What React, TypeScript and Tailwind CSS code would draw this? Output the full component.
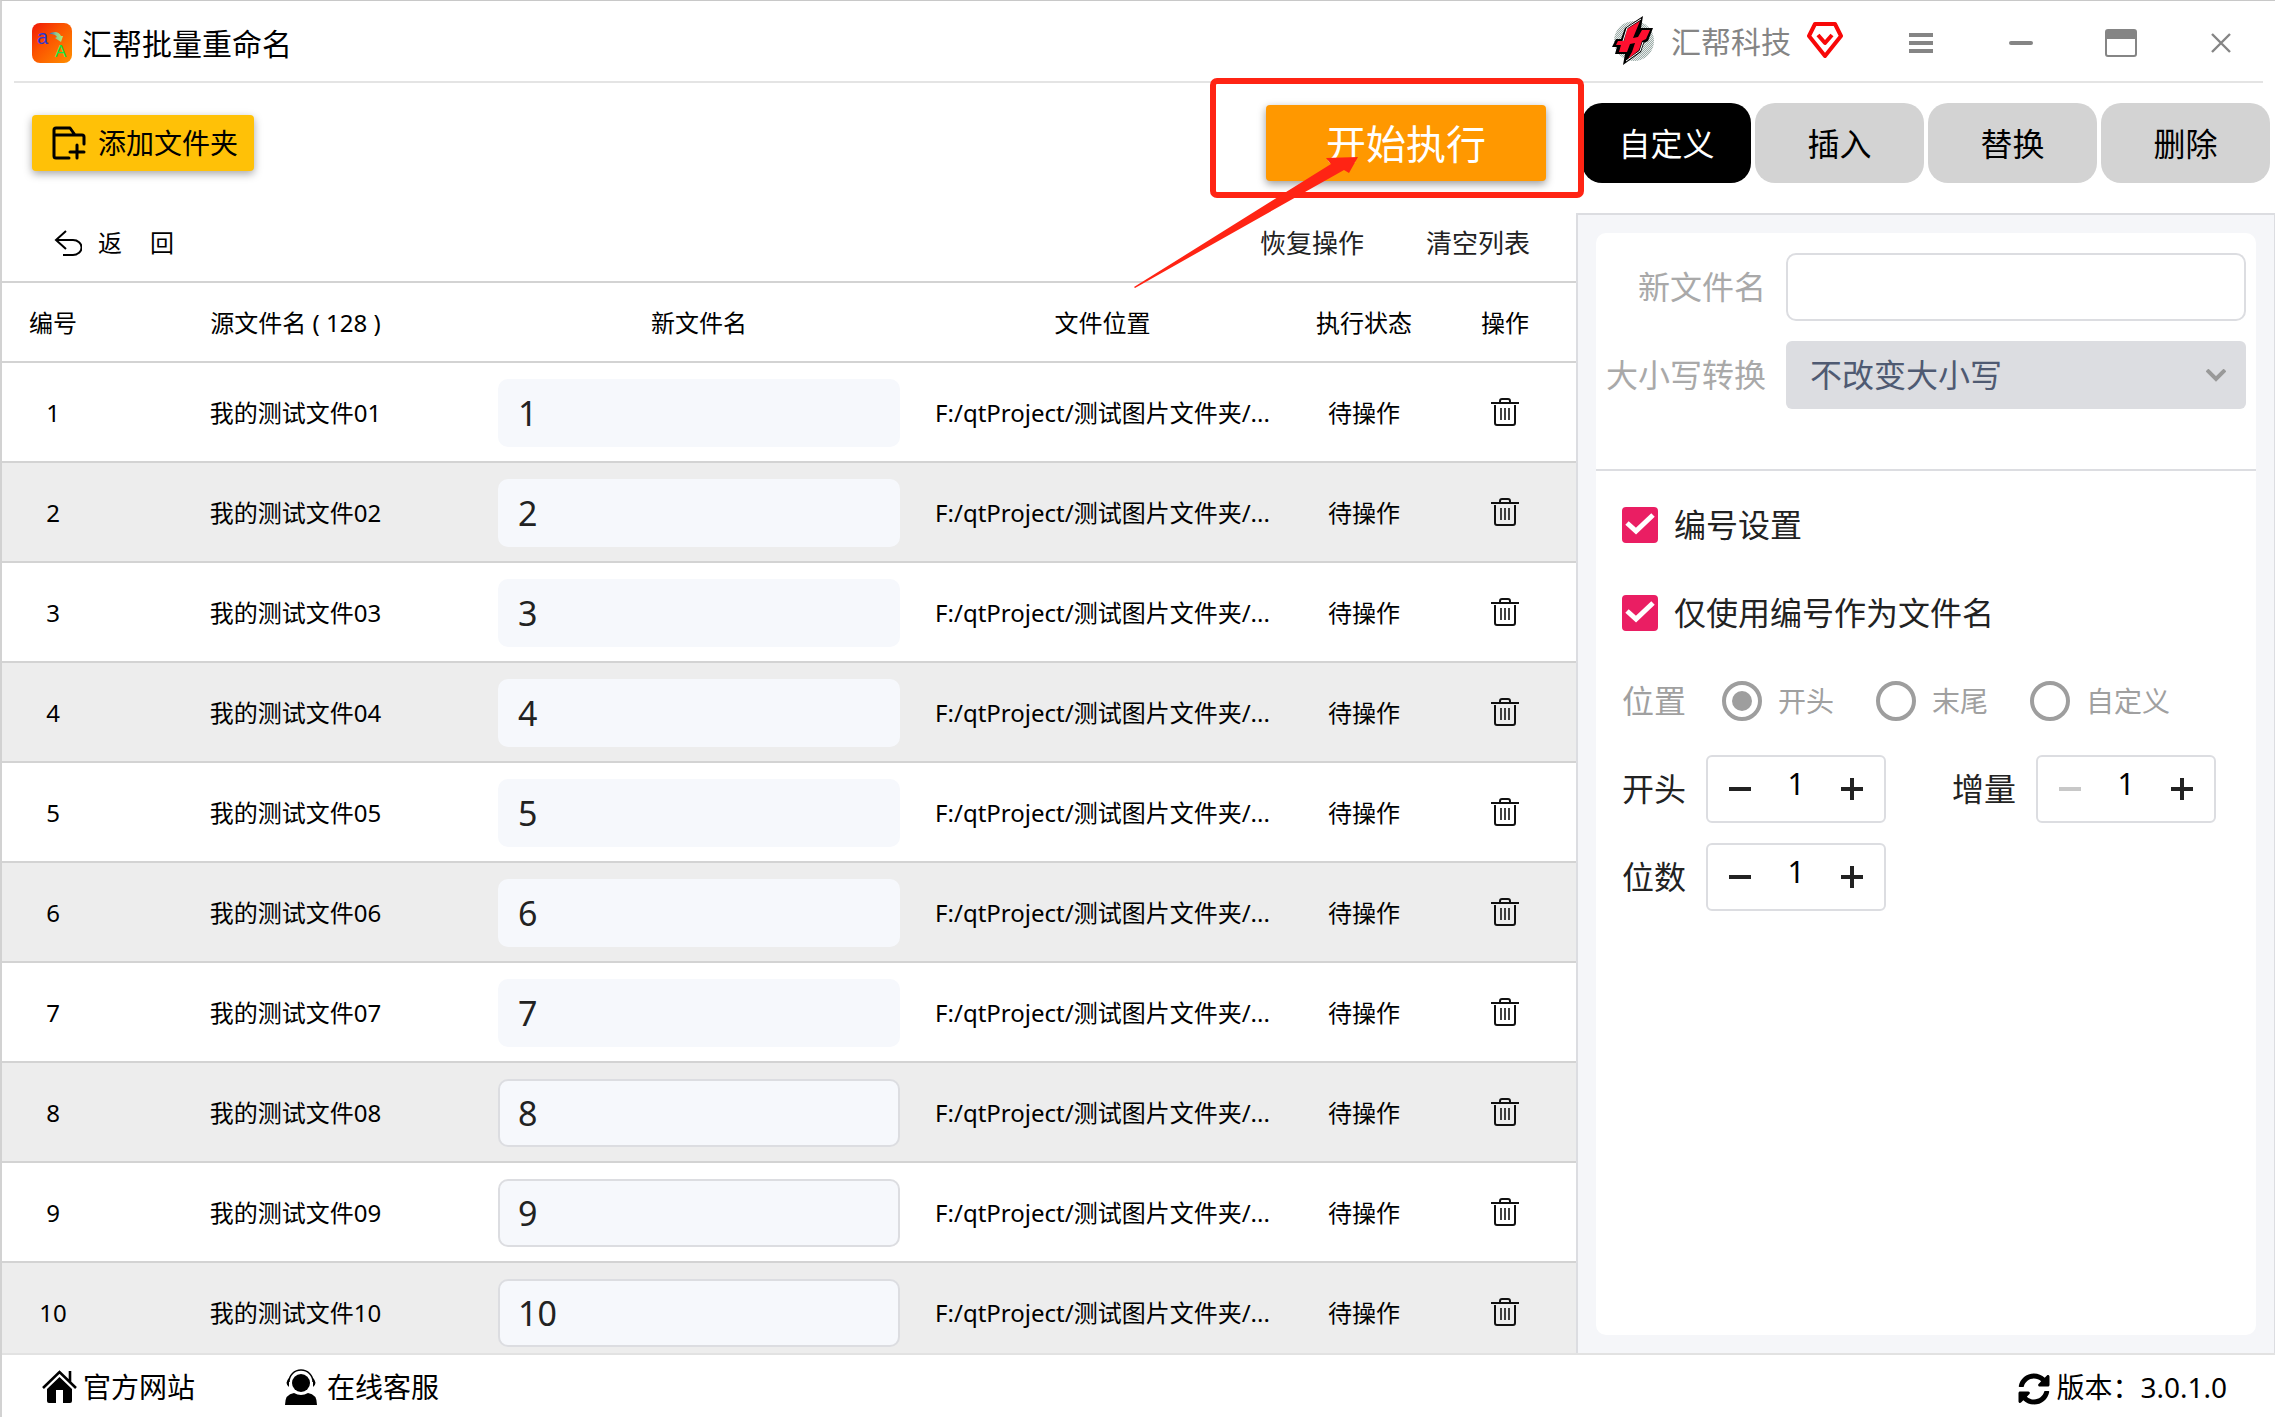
import { useState } from "react";

const initialRows = Array.from({ length: 10 }, (_, i) => ({
  id: i + 1,
  source: `我的测试文件${String(i + 1).padStart(2, "0")}`,
  target: String(i + 1),
  location: "F:/qtProject/测试图片文件夹/...",
  status: "待操作",
  outlined: i > 6,
}));

const tabs = ["自定义", "插入", "替换", "删除"];
const positions = ["开头", "末尾", "自定义"];

function AppLogo() {
  return (
    <svg width="40" height="40" viewBox="0 0 40 40" aria-hidden="true">
      <defs>
        <linearGradient id="logoBg" x1="0" y1="0" x2="1" y2="1">
          <stop offset="0" stopColor="#f01808" />
          <stop offset="0.4" stopColor="#fb5200" />
          <stop offset="1" stopColor="#ff9000" />
        </linearGradient>
        <linearGradient id="logoArrow" x1="0" y1="0" x2="1" y2="0">
          <stop offset="0" stopColor="#2858c8" />
          <stop offset="0.5" stopColor="#90c890" />
          <stop offset="1" stopColor="#b4f070" />
        </linearGradient>
      </defs>
      <rect width="40" height="40" rx="8" fill="url(#logoBg)" />
      <path d="M17 11c4-3 10-3 12 2l2 0-2 6-6-4 2-1c-2-3-5-3-8-3z" fill="url(#logoArrow)" />
      <text x="5" y="21" fontSize="20" fill="#3038d0" fontFamily="Liberation Sans, sans-serif">a</text>
      <text x="23" y="34" fontSize="17" fill="#10e848" fontFamily="Liberation Sans, sans-serif">A</text>
    </svg>
  );
}

function BrandLogo() {
  return (
    <svg width="44" height="50" viewBox="0 0 44 50" aria-hidden="true">
      <defs>
        <pattern id="dots" width="2" height="2" patternUnits="userSpaceOnUse">
          <rect width="2" height="2" fill="#e8eceb" />
          <rect width="1" height="1" fill="#9cabA7" />
          <rect x="1" y="1" width="1" height="1" fill="#9cabA7" />
        </pattern>
      </defs>
      <circle cx="23" cy="25" r="20" fill="url(#dots)" />
      <path d="M32 0 14 12 10 23H5L1 31H6L4 38 14 38 12 49 30 36 33 27 37 25 42 12H30z" fill="#000" />
      <path d="M29 5 16 13 13 25 7 25 5 29 10 29 8 36 16 36 19 28 24 27 21 36 17 43 28 34 31 25 35 23 39 14 31 14 27 21 22 22z" fill="#ff1030" />
      <path d="M30 3 16 12 12 25M15 45 29 35 32 26" stroke="#fff" strokeWidth="1" fill="none" />
    </svg>
  );
}

function TrashIcon() {
  return (
    <svg width="28" height="30" viewBox="0 0 28 30" fill="none" stroke="#111" strokeWidth="2" aria-hidden="true">
      <path d="M0 6h28M9 6V4q0-2 2-2h6q2 0 2 2v2M4 8v18q0 2 2 2h16q2 0 2-2V8" />
      <path d="M10 11v12M14 11v12M18 11v12" strokeWidth="1.6" />
    </svg>
  );
}

function CheckRow({ id, label }: { id: string; label: string }) {
  const [checked, setChecked] = useState(true);
  return (
    <div className="flex h-9 items-center gap-4">
      <span className="relative flex size-9">
        <input
          id={id}
          type="checkbox"
          checked={checked}
          onChange={(e) => setChecked(e.target.checked)}
          className="size-9 appearance-none rounded border-2 border-[#a0a0a0] checked:border-[#ea1e63] checked:bg-[#ea1e63]"
        />
        {checked && (
          <svg className="pointer-events-none absolute inset-0" width="36" height="36" viewBox="0 0 36 36" aria-hidden="true">
            <path d="M5 16l9 8L31 8" fill="none" stroke="#fff" strokeWidth="5" />
          </svg>
        )}
      </span>
      <label htmlFor={id} className="text-[32px] leading-9">{label}</label>
    </div>
  );
}

function Stepper({ id, label, dim }: { id: string; label: string; dim?: boolean }) {
  const [value, setValue] = useState(1);
  return (
    <div className="flex items-center gap-5">
      <label htmlFor={id} className="text-[32px]">{label}</label>
      <div className="flex h-[68px] w-[180px] items-center justify-between rounded-md border-2 border-[#dcdde1] px-[18px]">
        <button
          type="button"
          aria-label={`${label} -`}
          disabled={dim}
          onClick={() => setValue(value - 1)}
          className="flex size-7 items-center justify-center text-[#222] disabled:text-[#c8c8c8]"
        >
          <svg width="22" height="22" viewBox="0 0 22 22"><path d="M0 11h22" stroke="currentColor" strokeWidth="4" /></svg>
        </button>
        <input
          id={id}
          value={value}
          onChange={(e) => setValue(Number(e.target.value) || 0)}
          className="w-12 pb-3 text-center text-[30px] text-black outline-none"
        />
        <button type="button" aria-label={`${label} +`} onClick={() => setValue(value + 1)} className="flex size-7 items-center justify-center text-[#222]">
          <svg width="22" height="22" viewBox="0 0 22 22"><path d="M0 11h22M11 0v22" stroke="currentColor" strokeWidth="4" /></svg>
        </button>
      </div>
    </div>
  );
}

export default function App() {
  const [rows, setRows] = useState(initialRows);
  const [activeTab, setActiveTab] = useState("自定义");
  const [newName, setNewName] = useState("");

  const updateTarget = (id: number, target: string) => {
    setRows(rows.map((r) => (r.id === id ? { ...r, target } : r)));
  };

  return (
    <div className="relative flex h-screen flex-col overflow-hidden border-t border-l-2 border-t-[#c8c8c8] border-l-[#d2d2d2] bg-white font-['Noto_Sans','Noto_Sans_CJK_SC',sans-serif] text-[#222]">
      <header className="mx-3 flex h-[82px] shrink-0 items-center border-b-2 border-[#e4e4e4] pt-1 pr-[22px] pl-[18px]">
        <AppLogo />
        <h1 className="ml-[10px] flex-1 text-[30px] text-black">汇帮批量重命名</h1>
        <div className="mr-[58px] flex items-center pb-1">
          <BrandLogo />
          <span className="mr-4 ml-4 text-[30px] text-[#858585]">汇帮科技</span>
          <svg width="36" height="44" viewBox="0 0 36 44" fill="none" stroke="#f80808" strokeWidth="4" strokeLinejoin="round" aria-hidden="true">
            <path d="M8 5h20l6 12-16 20L2 17z" />
            <path d="M11 16l7 8 7-8" />
          </svg>
        </div>
        <div className="flex gap-[60px] text-[#858585]">
          <button type="button" aria-label="菜单" className="flex size-10 items-center justify-center">
            <svg width="24" height="20" viewBox="0 0 24 20"><path d="M0 2h24M0 10h24M0 18h24" stroke="currentColor" strokeWidth="4" /></svg>
          </button>
          <button type="button" aria-label="最小化" className="flex size-10 items-center justify-center">
            <svg width="24" height="4" viewBox="0 0 24 4"><rect width="24" height="4" rx="2" fill="currentColor" /></svg>
          </button>
          <button type="button" aria-label="最大化" className="flex size-10 items-center justify-center">
            <svg width="32" height="28" viewBox="0 0 32 28"><rect x="1" y="1" width="30" height="26" rx="2" fill="none" stroke="currentColor" strokeWidth="2" /><path d="M1 1h30v9H1z" fill="currentColor" /></svg>
          </button>
          <button type="button" aria-label="关闭" className="flex size-10 items-center justify-center">
            <svg width="20" height="20" viewBox="0 0 20 20"><path d="M1 1l18 18M19 1L1 19" stroke="currentColor" strokeWidth="2.4" /></svg>
          </button>
        </div>
      </header>

      <div className="flex min-h-0 flex-1">
        <main className="flex min-w-0 flex-1 flex-col overflow-hidden">
          <div className="flex h-[120px] shrink-0 items-center justify-between px-[30px]">
            <button type="button" className="flex h-14 items-center gap-3 rounded bg-[#ffc107] pr-4 pl-5 text-[28px] text-black shadow-[0_3px_8px_rgba(0,0,0,0.35)]">
              <svg width="34" height="34" viewBox="0 0 34 34" fill="none" stroke="#000" strokeWidth="3" strokeLinecap="round" strokeLinejoin="round" aria-hidden="true">
                <path d="M17 32H4q-2 0-2-2V4q0-2 2-2h14l5 7h7q2 0 2 2v7M2 9h21M25 19v13M18 26h14" />
              </svg>
              添加文件夹
            </button>
            <button type="button" className="h-[76px] w-[280px] rounded bg-[#ff9800] pt-[2px] text-[40px] text-white shadow-[0_3px_8px_rgba(0,0,0,0.4)]">
              开始执行
            </button>
          </div>

          <div className="flex h-20 shrink-0 items-center justify-between border-b-2 border-[#d3d3d3] pt-[2px] pr-[46px] pl-[52px]">
            <button type="button" className="flex items-center gap-4 text-[24px] text-black">
              <svg width="28" height="26" viewBox="0 0 28 26" fill="none" stroke="#000" strokeWidth="2" aria-hidden="true">
                <path d="M12 1L2 10l10 9M2 10h17a8 7 0 0 1 0 15H9" />
              </svg>
              <span className="flex gap-7"><span>返</span><span>回</span></span>
            </button>
            <div className="flex gap-[62px] text-[26px]">
              <button type="button">恢复操作</button>
              <button type="button">清空列表</button>
            </div>
          </div>

          <table className="w-full table-fixed border-separate border-spacing-0 text-center text-[24px] text-black">
            <thead>
              <tr className="h-20 *:border-b-2 *:border-[#d3d3d3] *:pt-[2px] *:font-normal">
                <th className="w-[102px]">编号</th>
                <th>源文件名 ( 128 )</th>
                <th className="w-[424px]">新文件名</th>
                <th>文件位置</th>
                <th className="w-[140px]">执行状态</th>
                <th className="w-[142px]">操作</th>
              </tr>
            </thead>
            <tbody>
              {rows.map((row) => (
                <tr key={row.id} className="h-[100px] *:border-b-2 *:border-[#d3d3d3] *:pt-[2px] even:bg-[#ededed]">
                  <td>{row.id}</td>
                  <td>{row.source}</td>
                  <td className="px-[11px]">
                    <input
                      aria-label={`新文件名 ${row.id}`}
                      value={row.target}
                      onChange={(e) => updateTarget(row.id, e.target.value)}
                      className={`block h-[68px] w-full rounded-[10px] border-2 bg-[#f6f8fc] px-[18px] text-[34px] text-[#222] outline-none ${row.outlined ? "border-[#dcdde1]" : "border-[#f6f8fc]"}`}
                    />
                  </td>
                  <td className="whitespace-nowrap">{row.location}</td>
                  <td>{row.status}</td>
                  <td>
                    <button type="button" aria-label={`删除 ${row.id}`} onClick={() => setRows(rows.filter((r) => r.id !== row.id))} className="mx-auto block pb-[2px]">
                      <TrashIcon />
                    </button>
                  </td>
                </tr>
              ))}
            </tbody>
          </table>
        </main>

        <aside className="relative flex w-[699px] shrink-0 flex-col">
          <div className="mt-5 mb-[30px] grid h-20 shrink-0 grid-cols-4 gap-1 pr-[5px] pl-[6px]">
            {tabs.map((tab) => (
              <button
                key={tab}
                type="button"
                onClick={() => setActiveTab(tab)}
                className={`rounded-[20px] pt-[2px] text-[32px] ${tab === activeTab ? "bg-black text-white" : "bg-[#d3d3d3] text-black"}`}
              >
                {tab}
              </button>
            ))}
          </div>

          <div className="flex min-h-0 flex-1 flex-col border-t-2 border-r border-l-2 border-[#dcdde1] bg-[#f5f6f9] p-[18px]">
            <div className="flex-1 rounded-[10px] bg-white">
              <div className="grid grid-cols-[160px_1fr] items-center gap-5 border-b-2 border-[#dcdde1] px-[10px] pt-5 pb-[60px] text-[32px]">
                <label htmlFor="newName" className="text-right text-[#a9a9a9]">新文件名</label>
                <input
                  id="newName"
                  value={newName}
                  onChange={(e) => setNewName(e.target.value)}
                  className="h-[68px] w-full rounded-[10px] border-2 border-[#dcdde1] px-5 outline-none"
                />
                <label htmlFor="letterCase" className="text-right text-[#a9a9a9]">大小写转换</label>
                <div className="relative">
                  <select id="letterCase" className="block h-[68px] w-full appearance-none rounded-md bg-[#dcdde1] px-6 text-[#4f5a72] outline-none">
                    <option>不改变大小写</option>
                    <option>全部大写</option>
                    <option>全部小写</option>
                  </select>
                  <svg className="pointer-events-none absolute top-7 right-5" width="20" height="14" viewBox="0 0 20 14" aria-hidden="true">
                    <path d="M1 1l9 9 9-9" fill="none" stroke="#999" strokeWidth="4" />
                  </svg>
                </div>
              </div>

              <div className="flex flex-col px-[26px] pt-9">
                <div className="mb-[52px]"><CheckRow id="useNumber" label="编号设置" /></div>
                <CheckRow id="onlyNumber" label="仅使用编号作为文件名" />

                <fieldset disabled className="mt-[46px] flex h-12 items-center pb-1 text-[#a0a0a0]">
                  <span className="mr-9 text-[32px]">位置</span>
                  <div className="flex gap-[42px]">
                    {positions.map((name, i) => (
                      <label key={name} className="flex items-center gap-4 text-[28px] leading-10">
                        <input
                          type="radio"
                          name="position"
                          defaultChecked={i === 0}
                          className="flex size-10 appearance-none items-center justify-center rounded-full border-4 border-[#9e9e9e] checked:before:size-5 checked:before:rounded-full checked:before:bg-[#9e9e9e]"
                        />
                        {name}
                      </label>
                    ))}
                  </div>
                </fieldset>

                <div className="mt-[30px] flex gap-[66px]">
                  <Stepper id="start" label="开头" />
                  <Stepper id="increment" label="增量" dim />
                </div>
                <div className="mt-5 flex">
                  <Stepper id="digits" label="位数" />
                </div>
              </div>
            </div>
          </div>

          {/* callout around the run button */}
          <svg className="pointer-events-none absolute -top-2 -left-[446px]" width="456" height="220" viewBox="0 0 456 220" aria-hidden="true">
            <rect x="83" y="6" width="368" height="114" rx="4" fill="none" stroke="#ff2414" strokeWidth="6" />
            <path d="M4 212L201 89 196 83 228 82 219 98 214 95 5 213z" fill="#ff2414" />
          </svg>
        </aside>
      </div>

      <footer className="flex h-16 shrink-0 items-center border-t-2 border-[#e2e2e2] pt-[2px] pr-12 pl-10 text-[28px] text-black">
        <a href="#site" className="mr-[90px] flex items-center gap-[6px]">
          <svg width="35" height="34" viewBox="0 0 35 34" aria-hidden="true">
            <path d="M17.500 7L30 19V31q0 2-2 2H21V20H14V33H7q-2 0-2-2V19z" />
            <path d="M1 18L17.500 2 34 18M28 12V1" fill="none" stroke="#000" strokeWidth="2.600" />
          </svg>
          官方网站
        </a>
        <a href="#service" className="flex flex-1 items-center gap-[10px]">
          <svg width="32" height="38" viewBox="0 0 32 38" aria-hidden="true">
            <circle cx="16" cy="15" r="9" />
            <path d="M4 14a12 12 0 0 1 24 0" fill="none" stroke="#000" strokeWidth="1.500" />
            <path d="M4 10q-5 5 0 9zM28 10q5 5 0 9zM0 37q0-11 9-12 7 4 14 0 9 1 9 12z" />
          </svg>
          在线客服
        </a>
        <div className="flex items-center gap-[6px]">
          <svg width="32" height="36" viewBox="0 -64 512 576" aria-hidden="true">
            <path d="M370.720 133.280C339.458 104.008 298.888 87.962 255.848 88c-77.458.068-144.328 53.178-162.791 126.850-1.344 5.363-6.122 9.150-11.651 9.150H24.103c-7.498 0-13.194-6.807-11.807-14.176C33.933 94.924 134.813 8 256 8c66.448 0 126.791 26.136 171.315 68.685L463.030 40.970C478.149 25.851 504 36.559 504 57.941V192c0 13.255-10.745 24-24 24H345.941c-21.382 0-32.090-25.851-16.971-40.971l41.750-41.749zM32 296h134.059c21.382 0 32.090 25.851 16.971 40.971l-41.750 41.750c31.262 29.273 71.835 45.319 114.876 45.280 77.418-.070 144.315-53.144 162.787-126.849 1.344-5.363 6.122-9.150 11.651-9.150h57.304c7.498 0 13.194 6.807 11.807 14.176C478.067 417.076 377.187 504 256 504c-66.448 0-126.791-26.136-171.315-68.685L48.970 471.030C33.851 486.149 8 475.441 8 454.059V320c0-13.255 10.745-24 24-24z" />
          </svg>
          <span>版本：3.0.1.0</span>
        </div>
      </footer>

      {/* edges of the window underneath */}
      <span className="absolute -top-px left-[723px] h-px w-5 bg-[#ff2414]" />
      <span className="absolute -top-px left-[1690px] h-px w-4 bg-[#ff2414]" />
      <span className="absolute top-[660px] -left-[2px] h-8 w-[2px] bg-[#e8a800]" />
    </div>
  );
}
